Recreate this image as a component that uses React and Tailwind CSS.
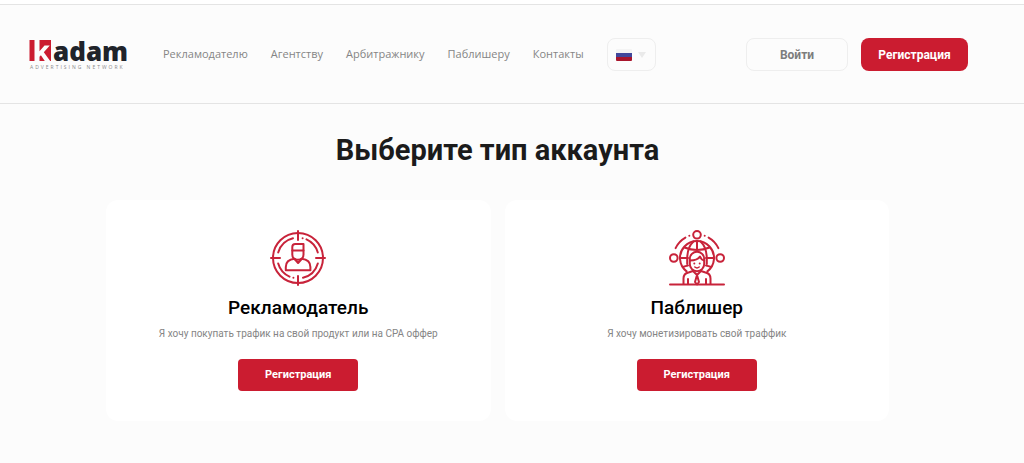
import React from "react";

const navLinks = ["Рекламодателю", "Агентству", "Арбитражнику", "Паблишеру", "Контакты"];

function Logo() {
  return (
    <svg width="100" height="32" viewBox="0 0 100 32" className="overflow-visible" role="img" aria-label="Kadam Advertising Network">
      <rect x="0.500" y="1" width="21.500" height="21" fill="#cb1c30" />
      <path d="M5.500 1h5v11.200l5-5.700h5.300l-6 6.800 6.400 8.700h-5.400l-3.900-5.700-1.400 1.500v4.200h-5z" fill="#fcfcfc" />
      <text x="24" y="22" fill="#20232a" className="font-['Open_Sans',sans-serif] text-[26px] font-extrabold">adam</text>
      <text x="1" y="30" fill="#8a8a8a" className="font-['Open_Sans',sans-serif] text-[5px] tracking-[2px]">ADVERTISING NETWORK</text>
    </svg>
  );
}

function AdvertiserIcon() {
  return (
    <svg width="56" height="56" viewBox="0 0 56 56" fill="none" stroke="#c8233a" strokeWidth="2" strokeLinecap="round" strokeLinejoin="round" aria-hidden="true">
      <circle cx="28" cy="28" r="25" />
      <path d="M28 1v9M28 46v9M1 28h9M46 28h9" />
      <path d="M8.200 22.500A20.500 20.500 0 0 1 23 8.200M36.500 9.400A20.500 20.500 0 0 1 47.800 22.500M8.200 33.500A20.500 20.500 0 0 0 19.500 46.600M33 47.800A20.500 20.500 0 0 0 47.800 33.500" />
      <path d="M32.600 8.200h.01M23.400 47.800h.01" />
      <path d="M22.300 20.500v-3.500q0-3 3-3h8.200v6.500z" />
      <path d="M22.300 20.500v4q0 5.300 5.600 5.300t5.600-5.300v-4" />
      <path d="M24.600 28.800C19 29.400 15.800 32.500 15.800 37v3.300h24.600V37c0-4.500-3.200-7.600-8.800-8.200" />
      <path d="M24.600 29l3.500 4 3.500-4" />
    </svg>
  );
}

function PublisherIcon() {
  return (
    <svg width="56" height="56" viewBox="0 0 56 56" fill="none" stroke="#c8233a" strokeWidth="2" strokeLinecap="round" strokeLinejoin="round" aria-hidden="true">
      <circle cx="28" cy="4.800" r="3.800" />
      <circle cx="4.800" cy="28" r="3.800" />
      <circle cx="51.200" cy="28" r="3.800" />
      <path d="M6.600 18.200A23.500 23.500 0 0 1 16.400 7.600M39.600 7.600A23.500 23.500 0 0 1 49.400 18.200M20.300 5.800h.01M35.700 5.800h.01" />
      <path d="M17.600 41.400A17 17 0 1 1 38.400 41.400" />
      <path d="M28 11v9M15.500 17.500q12.500 5 25 0M11 28h8M37 28h8M14 37q2.500-1.200 5-1.600M42 37q-2.500-1.200-5-1.600" />
      <path d="M24.500 11.500C20.500 15 18.500 20 18.200 28v6M31.500 11.500C35.500 15 37.500 20 37.800 28v6" />
      <path d="M20.800 29a7.200 7.200 0 0 1 14.400 0v5a7.200 7.200 0 0 1-14.400 0z" fill="#fff" />
      <path d="M21 30.500q7.500 0 10-4 1.300 3.500 4.200 4" />
      <path d="M25.300 33.500h.01M30.700 33.500h.01" />
      <path d="M25.800 37q2.200 1.800 4.400 0" strokeWidth="1.500" />
      <path d="M14.500 54V48.500q0-5 5-6l4.500-1.500M41.500 54V48.500q0-5-5-6L32 41M19 49v5M37 49v5" />
      <path d="M24 41l4 4 4-4M28 45l-2 7 2 2.500 2-2.500z" />
      <path d="M1 54.500h54" />
    </svg>
  );
}

function AccountCard({ icon, title, text }) {
  return (
    <section className="flex flex-1 flex-col items-center rounded-xl bg-white px-6 pt-[30px] pb-[30px] text-center">
      {icon}
      <h2 className="mt-2 text-[19px] leading-7 font-medium text-black">{title}</h2>
      <p className="mt-1 text-[10px] leading-4 text-[#858585]">{text}</p>
      <button type="button" className="mt-[17px] h-8 w-[120px] rounded bg-[#cb1c30] text-[11px] font-bold text-white">
        Регистрация
      </button>
    </section>
  );
}

export default function App() {
  return (
    <div className="min-h-screen bg-[#fcfcfc] font-[Roboto,sans-serif]">
      <div className="h-1 bg-white" />
      <header className="flex items-center border-y border-[#e4e4e4] pt-[33px] pr-14 pb-8 pl-[29px]">
        <a href="#" className="shrink-0"><Logo /></a>
        <nav className="ml-[34px] flex items-center gap-[23px] font-['Open_Sans',sans-serif] text-[11px] text-[#858585]">
          {navLinks.map((label) => (
            <a key={label} href="#">{label}</a>
          ))}
        </nav>
        <button type="button" aria-label="Русский" aria-haspopup="listbox" className="ml-[23px] flex h-[33px] w-[49px] items-center justify-center gap-1.5 rounded-lg border border-[#eeeeee]">
          <svg width="16" height="12" viewBox="0 0 16 12" aria-hidden="true">
            <path d="M1 0h14q1 0 1 1v3H0V1q0-1 1-1z" fill="#f4f4f4" />
            <path d="M0 4h16v4H0z" fill="#41479b" />
            <path d="M0 8h16v3q0 1-1 1H1q-1 0-1-1z" fill="#a8152c" />
          </svg>
          <svg width="8" height="6" viewBox="0 0 8 6" aria-hidden="true">
            <path d="M0 0h8L4 6z" fill="#eaeaea" />
          </svg>
        </button>
        <div className="ml-auto flex items-center gap-[13px] text-[12px] font-bold">
          <button type="button" className="h-[33px] w-[102px] rounded-lg border border-[#eeeeee] text-[#7d7d7d]">Войти</button>
          <button type="button" className="h-[33px] w-[107px] rounded-lg bg-[#cb1c30] text-white">Регистрация</button>
        </div>
      </header>
      <main className="pt-7 pr-[135px] pb-10 pl-[106px]">
        <h1 className="text-center text-[29px] leading-9 font-bold text-[#1b1b1b]">Выберите тип аккаунта</h1>
        <div className="mt-8 flex gap-[14px]">
          <AccountCard icon={<AdvertiserIcon />} title="Рекламодатель" text="Я хочу покупать трафик на свой продукт или на CPA оффер" />
          <AccountCard icon={<PublisherIcon />} title="Паблишер" text="Я хочу монетизировать свой траффик" />
        </div>
      </main>
    </div>
  );
}
